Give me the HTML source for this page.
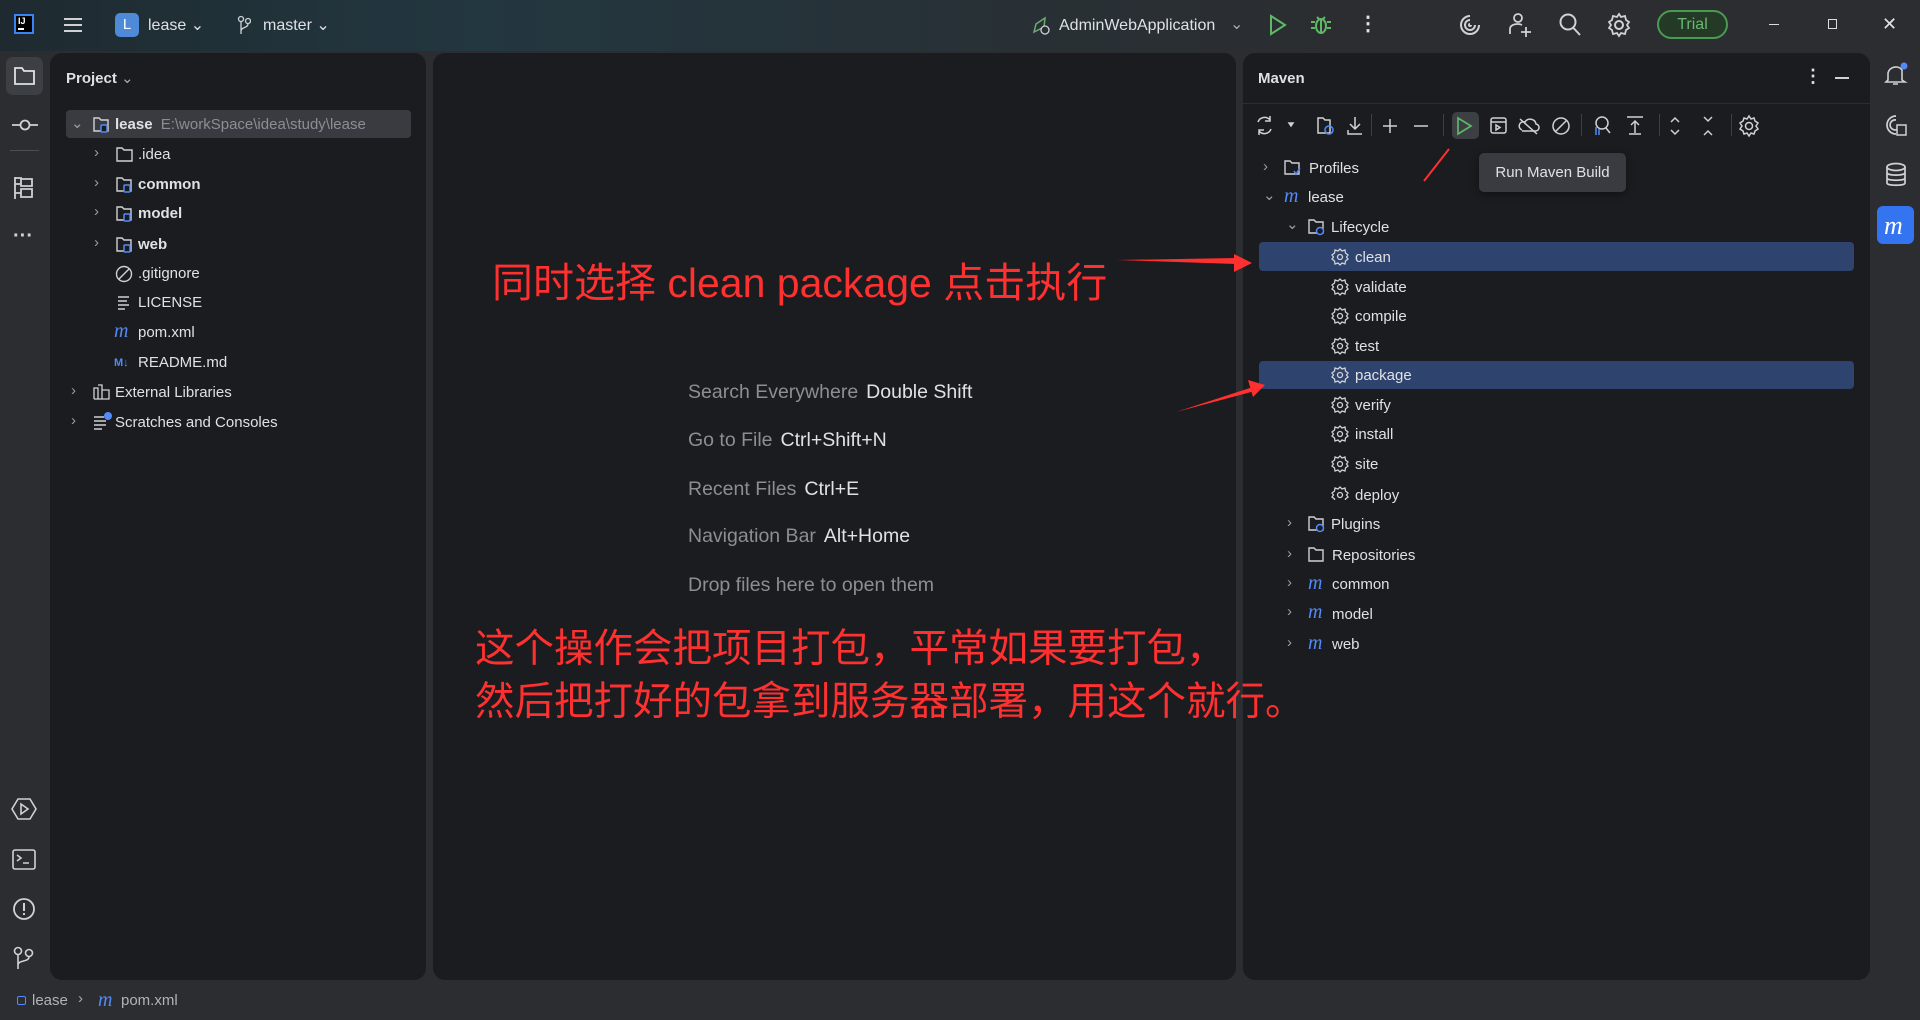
<!DOCTYPE html>
<html><head><meta charset="utf-8">
<style>
*{margin:0;padding:0;box-sizing:border-box}
body{width:1920px;height:1020px;overflow:hidden;background:#2b2d30;font-family:"Liberation Sans","Noto Sans CJK SC",sans-serif;color:#dfe1e5;position:relative}
.a{position:absolute}
.top{left:0;top:0;width:1920px;height:51px;background:linear-gradient(90deg,#1e2a30 0%,#233740 25%,#263238 45%,#2b2d30 70%)}
.panel{background:#1b1c1f;border-radius:12px}
.t{position:absolute;font-size:15px;white-space:nowrap;line-height:20px}
.ico{position:absolute}
.hint{position:absolute;font-size:19.5px;color:#8b8e94;white-space:nowrap}
.hint b{font-weight:normal;color:#dfe1e5;margin-left:8px}
.red{position:absolute;color:#ff3030;font-size:41px;white-space:nowrap;font-family:"Liberation Sans","Noto Sans CJK SC",sans-serif}
.chev{position:absolute;color:#9a9da3;font-size:15px}
.m{position:absolute;color:#548af7;font-style:italic;font-size:20px;font-family:"Liberation Serif",serif;line-height:20px}
</style></head><body>
<div class="a top"></div>
<!-- top bar -->
<div class="a" style="left:14px;top:14px;width:20px;height:20px;background:#000;border:2px solid #3b82f6"></div>
<div class="a" style="left:18px;top:16px;font-size:9px;color:#fff;font-weight:bold">IJ</div>
<div class="a" style="left:18px;top:28px;width:6px;height:2px;background:#fff"></div>
<svg class="ico" style="left:63px;top:15px" width="20" height="20"><path d="M1 4H19M1 10H19M1 16H19" stroke="#cfd1d5" stroke-width="2"/></svg>
<div class="a" style="left:115px;top:13px;width:24px;height:24px;background:#4e8ad8;border-radius:5px;color:#fff;font-size:15px;text-align:center;line-height:24px">L</div>
<div class="t" style="left:148px;top:16px;font-size:16px">lease ⌄</div>
<svg class="ico" style="left:237px;top:15px" width="14" height="20"><circle cx="4" cy="4" r="2.5" fill="none" stroke="#cfd1d5" stroke-width="1.3"/><circle cx="11" cy="6" r="2.5" fill="none" stroke="#cfd1d5" stroke-width="1.3"/><path d="M4 7V19M11 9C11 13 4 12 4 16" fill="none" stroke="#cfd1d5" stroke-width="1.3"/></svg>
<div class="t" style="left:263px;top:16px;font-size:16px">master ⌄</div>
<svg class="ico" style="left:1031px;top:15px" width="20" height="20"><path d="M3 17L5 9L14 3L13 12Z" fill="none" stroke="#6aab73" stroke-width="1.5"/><circle cx="14" cy="15" r="4" fill="#2b2d30" stroke="#cfd1d5" stroke-width="1.3"/></svg>
<div class="t" style="left:1059px;top:16px;font-size:16px">AdminWebApplication</div>
<div class="t" style="left:1230px;top:15px;font-size:16px;color:#aaa">⌄</div>
<svg class="ico" style="left:1268px;top:14px" width="20" height="22"><path d="M3 2L17 11L3 20Z" fill="none" stroke="#5fb865" stroke-width="2"/></svg>
<svg class="ico" style="left:1310px;top:13px" width="22" height="22"><ellipse cx="11" cy="13" rx="5" ry="7" fill="none" stroke="#5fb865" stroke-width="2"/><path d="M1 9H5M17 9H21M1 15H5M17 15H21M7 4L9 6M15 4L13 6M11 7V20" stroke="#5fb865" stroke-width="2"/></svg>
<div class="t" style="left:1358px;top:14px;font-size:20px;font-weight:bold">⋮</div>
<svg class="ico" style="left:1458px;top:13px" width="24" height="24"><path d="M12 3A9 9 0 1 0 21 12M12 7A5 5 0 1 0 17 12M12 11A1 1 0 1 0 13 12" fill="none" stroke="#cfd1d5" stroke-width="2"/></svg>
<svg class="ico" style="left:1508px;top:12px" width="24" height="26"><circle cx="10" cy="6" r="4" fill="none" stroke="#cfd1d5" stroke-width="1.8"/><path d="M2 22V17C2 14 5 12 10 12C12 12 13 12.5 14 13M18 15V25M13 20H23" fill="none" stroke="#cfd1d5" stroke-width="1.8"/></svg>
<svg class="ico" style="left:1558px;top:12px" width="24" height="26"><circle cx="10" cy="10" r="7.5" fill="none" stroke="#cfd1d5" stroke-width="2"/><path d="M15.5 16L22 23" stroke="#cfd1d5" stroke-width="2"/></svg>
<svg class="ico" style="left:1607px;top:12px" width="24" height="26"><circle cx="12" cy="13" r="4" fill="none" stroke="#cfd1d5" stroke-width="2"/><path d="M12 2L14 5L18 4L19 8L22 10L20 13L22 16L19 18L18 22L14 21L12 24L10 21L6 22L5 18L2 16L4 13L2 10L5 8L6 4L10 5Z" fill="none" stroke="#cfd1d5" stroke-width="1.8"/></svg>
<div class="a" style="left:1657px;top:10px;width:71px;height:29px;border:2px solid #4b9a52;border-radius:15px;background:#243a27;color:#69b86f;font-size:16px;text-align:center;line-height:25px">Trial</div>
<div class="a" style="left:1769px;top:24px;width:10px;height:1px;background:#ddd"></div>
<div class="a" style="left:1828px;top:19px;width:9px;height:10px;border:1.5px solid #ddd"></div>
<div class="t" style="left:1882px;top:14px;font-size:18px">✕</div>

<!-- left strip -->
<div class="a" style="left:6px;top:57px;width:37px;height:38px;background:#3c3f44;border-radius:7px"></div>
<svg class="ico" style="left:13px;top:65px" width="24" height="22"><path d="M2 3H9L11 6H21V19H2Z" fill="none" stroke="#dfe1e5" stroke-width="1.8"/></svg>
<svg class="ico" style="left:11px;top:116px" width="28" height="18"><circle cx="14" cy="9" r="4.5" fill="none" stroke="#cfd1d5" stroke-width="1.8"/><path d="M1 9H9.5M18.5 9H27" stroke="#cfd1d5" stroke-width="1.8"/></svg>
<div class="a" style="left:10px;top:150px;width:29px;height:1px;background:#4a4d52"></div>
<svg class="ico" style="left:13px;top:175px" width="22" height="26"><path d="M2 2V24M2 3H8V9H2M8 4H19V11H8ZM8 14H19V22H8ZM2 18H8" fill="none" stroke="#cfd1d5" stroke-width="1.8"/></svg>
<div class="t" style="left:13px;top:226px;font-size:20px;font-weight:bold;color:#cfd1d5">···</div>
<svg class="ico" style="left:11px;top:797px" width="26" height="24"><path d="M7 2H19L25 12L19 22H7L1 12Z M10 7L17 12L10 17Z" fill="none" stroke="#cfd1d5" stroke-width="1.6"/></svg>
<svg class="ico" style="left:12px;top:849px" width="24" height="22"><rect x="1" y="1" width="22" height="19" rx="2" fill="none" stroke="#cfd1d5" stroke-width="1.6"/><path d="M5 6L9 9L5 12M11 14H17" fill="none" stroke="#cfd1d5" stroke-width="1.6"/></svg>
<svg class="ico" style="left:12px;top:897px" width="24" height="24"><circle cx="12" cy="12" r="10" fill="none" stroke="#cfd1d5" stroke-width="1.8"/><path d="M12 6V14M12 16V18" stroke="#cfd1d5" stroke-width="2"/></svg>
<svg class="ico" style="left:13px;top:946px" width="22" height="24"><circle cx="5" cy="5" r="3.5" fill="none" stroke="#cfd1d5" stroke-width="1.6"/><circle cx="16" cy="7" r="3.5" fill="none" stroke="#cfd1d5" stroke-width="1.6"/><path d="M5 9V23M16 11C16 16 5 14 5 19" fill="none" stroke="#cfd1d5" stroke-width="1.6"/></svg>

<!-- right strip -->
<svg class="ico" style="left:1884px;top:62px" width="24" height="26"><path d="M4 18V11A8 8 0 0 1 18 8V18L21 20H2Z M9 22H14" fill="none" stroke="#cfd1d5" stroke-width="1.6"/><circle cx="20" cy="4" r="3.5" fill="#548af7"/></svg>
<svg class="ico" style="left:1884px;top:113px" width="24" height="26"><path d="M12 3A9 9 0 1 0 12 21M12 7A5 5 0 1 0 14 16" fill="none" stroke="#cfd1d5" stroke-width="1.7"/><rect x="13" y="12" width="9" height="10" fill="#2b2d30" stroke="#cfd1d5" stroke-width="1.5"/></svg>
<svg class="ico" style="left:1885px;top:162px" width="22" height="26"><ellipse cx="11" cy="5" rx="9" ry="3.5" fill="none" stroke="#cfd1d5" stroke-width="1.7"/><path d="M2 5V21C2 24 20 24 20 21V5M2 10.5C2 14 20 14 20 10.5M2 16C2 19 20 19 20 16" fill="none" stroke="#cfd1d5" stroke-width="1.7"/></svg>
<div class="a" style="left:1877px;top:206px;width:37px;height:38px;background:#3574f0;border-radius:6px"></div>
<div class="m" style="left:1884px;top:214px;color:#fff;font-size:26px;line-height:24px">m</div>

<!-- Project panel -->
<div class="a panel" style="left:50px;top:53px;width:376px;height:927px"></div>
<div class="t" style="left:66px;top:69px;font-weight:bold">Project <span style="font-weight:normal;color:#aaa">⌄</span></div>
<div class="a" style="left:66px;top:110px;width:345px;height:28px;background:#393b40;border-radius:4px"></div>
<div class="chev" style="left:71px;top:114px">⌄</div>
<svg class="ico" style="left:92px;top:115px" width="20" height="20"><path d="M2 3H7L9 5H16V16H2Z" fill="none" stroke="#cfd1d5" stroke-width="1.4"/><rect x="9" y="10" width="6" height="7" rx="1" fill="#1b1c1f" stroke="#548af7" stroke-width="1.5"/></svg>
<div class="t" style="left:115px;top:115px;font-weight:bold">lease <span style="font-weight:normal;color:#8b8e94;margin-left:4px">E:\workSpace\idea\study\lease</span></div>
<div class="chev" style="left:94px;top:144px">›</div>
<svg class="ico" style="left:115px;top:145px" width="20" height="20"><path d="M2 3H7L9 5H17V16H2Z" fill="none" stroke="#cfd1d5" stroke-width="1.4"/></svg>
<div class="t" style="left:138px;top:145px">.idea</div>
<div class="chev" style="left:94px;top:174px">›</div>
<svg class="ico" style="left:115px;top:175px" width="20" height="20"><path d="M2 3H7L9 5H16V16H2Z" fill="none" stroke="#cfd1d5" stroke-width="1.4"/><rect x="9" y="10" width="6" height="7" rx="1" fill="#1b1c1f" stroke="#548af7" stroke-width="1.5"/></svg>
<div class="t" style="left:138px;top:175px;font-weight:bold">common</div>
<div class="chev" style="left:94px;top:203px">›</div>
<svg class="ico" style="left:115px;top:204px" width="20" height="20"><path d="M2 3H7L9 5H16V16H2Z" fill="none" stroke="#cfd1d5" stroke-width="1.4"/><rect x="9" y="10" width="6" height="7" rx="1" fill="#1b1c1f" stroke="#548af7" stroke-width="1.5"/></svg>
<div class="t" style="left:138px;top:204px;font-weight:bold">model</div>
<div class="chev" style="left:94px;top:234px">›</div>
<svg class="ico" style="left:115px;top:235px" width="20" height="20"><path d="M2 3H7L9 5H16V16H2Z" fill="none" stroke="#cfd1d5" stroke-width="1.4"/><rect x="9" y="10" width="6" height="7" rx="1" fill="#1b1c1f" stroke="#548af7" stroke-width="1.5"/></svg>
<div class="t" style="left:138px;top:235px;font-weight:bold">web</div>
<svg class="ico" style="left:115px;top:264px" width="20" height="20"><circle cx="9" cy="10" r="7.5" fill="none" stroke="#cfd1d5" stroke-width="1.4"/><path d="M4 15L14 5" stroke="#cfd1d5" stroke-width="1.4"/></svg>
<div class="t" style="left:138px;top:264px">.gitignore</div>
<svg class="ico" style="left:115px;top:293px" width="20" height="20"><path d="M3 4H14M3 8H12M3 12H14M3 16H10" stroke="#cfd1d5" stroke-width="1.4"/></svg>
<div class="t" style="left:138px;top:293px">LICENSE</div>
<div class="m" style="left:114px;top:321px">m</div>
<div class="t" style="left:138px;top:323px">pom.xml</div>
<div class="t" style="left:114px;top:353px;font-size:11px;color:#548af7;font-weight:bold">M↓</div>
<div class="t" style="left:138px;top:353px">README.md</div>
<div class="chev" style="left:71px;top:382px">›</div>
<svg class="ico" style="left:92px;top:382px" width="20" height="20"><path d="M2 17V6H6V17M6 3H10V17M10 8H17V17H2" fill="none" stroke="#cfd1d5" stroke-width="1.3"/></svg>
<div class="t" style="left:115px;top:383px">External Libraries</div>
<div class="chev" style="left:71px;top:412px">›</div>
<svg class="ico" style="left:92px;top:411px" width="22" height="20"><path d="M2 6H12M2 10H14M2 14H14M2 18H10" stroke="#cfd1d5" stroke-width="1.4"/><circle cx="16" cy="5" r="4" fill="#548af7"/></svg>
<div class="t" style="left:115px;top:413px">Scratches and Consoles</div>

<!-- Editor -->
<div class="a panel" style="left:433px;top:53px;width:803px;height:927px"></div>
<div class="hint" style="left:688px;top:381px">Search Everywhere<b>Double Shift</b></div>
<div class="hint" style="left:688px;top:429px">Go to File<b>Ctrl+Shift+N</b></div>
<div class="hint" style="left:688px;top:478px">Recent Files<b>Ctrl+E</b></div>
<div class="hint" style="left:688px;top:525px">Navigation Bar<b>Alt+Home</b></div>
<div class="hint" style="left:688px;top:574px">Drop files here to open them</div>

<!-- Maven -->
<div class="a panel" style="left:1243px;top:53px;width:627px;height:927px"></div>
<div class="t" style="left:1258px;top:69px;font-weight:bold">Maven</div>
<div class="t" style="left:1804px;top:66px;font-size:18px;font-weight:bold">⋮</div>
<div class="a" style="left:1835px;top:77px;width:14px;height:2px;background:#cfd1d5"></div>
<div class="a" style="left:1243px;top:103px;width:627px;height:1px;background:#2b2d30"></div>
<div class="a" style="left:1452px;top:112px;width:27px;height:27px;background:#3c3f44;border-radius:5px"></div>
<svg class="ico" style="left:1254px;top:113px" width="400" height="26" fill="none" stroke="#cfd1d5" stroke-width="1.5">
<path d="M4 9A7 7 0 0 1 16 7M16 3V8H11M17 16A7 7 0 0 1 5 18M5 22V17H10"/>
<path d="M35 10L39 10L37 13Z" fill="#cfd1d5"/>
<path d="M64 5H69L71 7H76V20H64Z"/><circle cx="75" cy="17" r="4" stroke="#548af7"/>
<path d="M101 4V16M96 11L101 16L106 11M94 17V21H108"/>
<path d="M136 6V20M129 13H143" />
<path d="M160 13H174"/>
<path d="M204 5L217 13L204 21Z" stroke="#5fb865" stroke-width="1.7"/>
<rect x="237" y="5" width="15" height="15" rx="2"/><path d="M237 9H252M242 12V17L246 14.5Z"/>
<path d="M268 17A4 4 0 0 1 271 9A6 6 0 0 1 282 11A3.5 3.5 0 0 1 281 18H268M266 6L283 21"/>
<circle cx="307" cy="13" r="8"/><path d="M301 19L313 7"/>
<circle cx="348" cy="10" r="6"/><path d="M352 15L356 20"/><path d="M342 14V22M345 16V22" stroke="#548af7"/>
<path d="M373 4H389M375 21H387M381 20V8M377 12L381 8L385 12"/>
</svg>
<svg class="ico" style="left:1665px;top:113px" width="100" height="26" fill="none" stroke="#cfd1d5" stroke-width="1.5">
<path d="M6 9L10 5L14 9M6 17L10 21L14 17"/>
<path d="M39 4L43 8L47 4M39 22L43 18L47 22"/>
<circle cx="84" cy="13" r="3.5"/><path d="M84 3L86 6L89 5L90 8L93 10L91 13L93 16L90 18L89 21L86 20L84 23L82 20L79 21L78 18L75 16L77 13L75 10L78 8L79 5L82 6Z"/>
</svg>
<div class="a" style="left:1371px;top:114px;width:1px;height:22px;background:#3c3f44"></div>
<div class="a" style="left:1443px;top:114px;width:1px;height:22px;background:#3c3f44"></div>
<div class="a" style="left:1581px;top:114px;width:1px;height:22px;background:#3c3f44"></div>
<div class="a" style="left:1659px;top:114px;width:1px;height:22px;background:#3c3f44"></div>
<div class="a" style="left:1731px;top:114px;width:1px;height:22px;background:#3c3f44"></div>

<div class="chev" style="left:1263px;top:158px">›</div>
<svg class="ico" style="left:1283px;top:158px" width="20" height="20"><path d="M2 3H7L9 5H16V16H2Z" fill="none" stroke="#cfd1d5" stroke-width="1.4"/><path d="M11 13L13 16L17 10" fill="none" stroke="#548af7" stroke-width="1.5"/></svg>
<div class="t" style="left:1309px;top:159px">Profiles</div>
<div class="chev" style="left:1263px;top:186px">⌄</div>
<div class="m" style="left:1284px;top:186px">m</div>
<div class="t" style="left:1308px;top:188px">lease</div>
<div class="chev" style="left:1286px;top:215px">⌄</div>
<svg class="ico" style="left:1307px;top:217px" width="20" height="20"><path d="M2 3H7L9 5H16V16H2Z" fill="none" stroke="#cfd1d5" stroke-width="1.4"/><circle cx="13" cy="14" r="3.5" fill="#1b1c1f" stroke="#548af7" stroke-width="1.5"/></svg>
<div class="t" style="left:1331px;top:218px">Lifecycle</div>
<div class="a" style="left:1259px;top:242px;width:595px;height:29px;background:#2e436e;border-radius:4px"></div>
<div class="a" style="left:1259px;top:361px;width:595px;height:28px;background:#2e436e;border-radius:4px"></div>
<div class="t" style="left:1355px;top:248px">clean</div>
<div class="t" style="left:1355px;top:278px">validate</div>
<div class="t" style="left:1355px;top:307px">compile</div>
<div class="t" style="left:1355px;top:337px">test</div>
<div class="t" style="left:1355px;top:366px">package</div>
<div class="t" style="left:1355px;top:396px">verify</div>
<div class="t" style="left:1355px;top:425px">install</div>
<div class="t" style="left:1355px;top:455px">site</div>
<div class="t" style="left:1355px;top:486px">deploy</div>
<svg class="ico" style="left:1331px;top:240px" width="18" height="260" fill="none" stroke="#cfd1d5" stroke-width="1.3">
<g id="g"><circle cx="9" cy="17" r="2.5"/><path d="M9 9L11 11L14 10L14.5 13L17 15L15.5 17L17 19L14.5 21L14 24L11 23L9 25L7 23L4 24L3.5 21L1 19L2.5 17L1 15L3.5 13L4 10L7 11Z"/></g>
<use href="#g" y="30"/><use href="#g" y="59"/><use href="#g" y="89"/><use href="#g" y="118"/><use href="#g" y="148"/><use href="#g" y="177"/><use href="#g" y="207"/><use href="#g" y="238"/>
</svg>
<div class="chev" style="left:1287px;top:514px">›</div>
<svg class="ico" style="left:1307px;top:514px" width="20" height="20"><path d="M2 3H7L9 5H16V16H2Z" fill="none" stroke="#cfd1d5" stroke-width="1.4"/><circle cx="13" cy="14" r="3.5" fill="#1b1c1f" stroke="#548af7" stroke-width="1.5"/></svg>
<div class="t" style="left:1331px;top:515px">Plugins</div>
<div class="chev" style="left:1287px;top:545px">›</div>
<svg class="ico" style="left:1307px;top:545px" width="20" height="20"><path d="M2 3H7L9 5H16V16H2Z" fill="none" stroke="#cfd1d5" stroke-width="1.4"/></svg>
<div class="t" style="left:1332px;top:546px">Repositories</div>
<div class="chev" style="left:1287px;top:574px">›</div><div class="m" style="left:1308px;top:573px">m</div><div class="t" style="left:1332px;top:575px">common</div>
<div class="chev" style="left:1287px;top:603px">›</div><div class="m" style="left:1308px;top:602px">m</div><div class="t" style="left:1332px;top:605px">model</div>
<div class="chev" style="left:1287px;top:634px">›</div><div class="m" style="left:1308px;top:633px">m</div><div class="t" style="left:1332px;top:635px">web</div>

<!-- tooltip -->
<div class="a" style="left:1479px;top:153px;width:147px;height:39px;background:#393b40;border-radius:5px;font-size:15px;line-height:39px;text-align:center;box-shadow:0 2px 8px rgba(0,0,0,.4)">Run Maven Build</div>

<!-- annotations -->
<div class="red" style="left:492px;top:249px">同时选择 clean package 点击执行</div>
<div class="red" style="left:475px;top:623px;font-size:39.5px;line-height:53px">这个操作会把项目打包，平常如果要打包，<br>然后把打好的包拿到服务器部署，用这个就行。</div>
<svg class="ico" style="left:0;top:0" width="1920" height="1020">
<path d="M1117 260L1236 264L1236 258Z" fill="#ff3030"/><path d="M1234 254L1252 263L1234 272Z" fill="#ff3030"/>
<path d="M1176 412L1255 391L1253 387Z" fill="#ff3030"/><path d="M1248 380L1265 385L1253 397Z" fill="#ff3030"/>
<path d="M1449 149L1424 181" stroke="#ff3030" stroke-width="2"/>
</svg>

<!-- status bar -->
<div class="a" style="left:17px;top:996px;width:9px;height:9px;border:1.5px solid #548af7;border-radius:2px"></div>
<div class="t" style="left:32px;top:991px;color:#b0b3b8">lease</div>
<div class="t" style="left:78px;top:989px;color:#aaa">›</div>
<div class="m" style="left:98px;top:990px">m</div>
<div class="t" style="left:121px;top:991px;color:#b0b3b8">pom.xml</div>
</body></html>
